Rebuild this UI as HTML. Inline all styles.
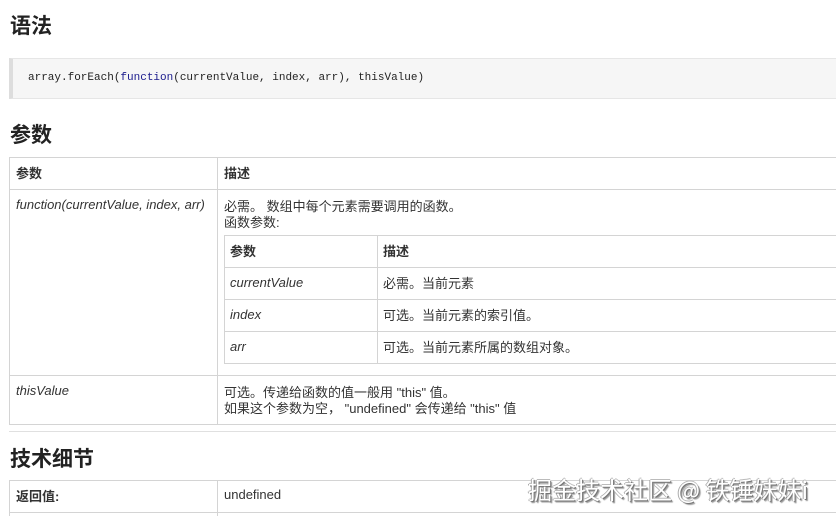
<!DOCTYPE html>
<html><head><meta charset="utf-8"><style>
body{margin:0;width:836px;height:516px;overflow:hidden;background:#fff;font-family:"Liberation Sans","Noto Sans CJK SC",sans-serif;font-size:13px;color:#333;position:relative}
.a{position:absolute}
h2{position:absolute;margin:0;font-size:21px;font-weight:bold;color:#222;left:10px}
.code{left:9px;top:58px;width:827px;height:41px;background:#f6f6f6;border-left:4px solid #ddd;border-top:1px solid #e6e6e6;border-bottom:1px solid #e6e6e6;box-sizing:border-box;font-family:"Liberation Mono",monospace;font-size:11px;line-height:39px;padding-left:15px;color:#222}
.code .k{color:#1a1a8c}
.line{position:absolute;background:#d4d4d4}
.t{position:absolute;font-size:13px;line-height:16px}
i{font-style:italic}
b{font-weight:bold}
.wm{position:absolute;left:528px;top:471px;font-size:24px;color:#fff;text-shadow:1px 1px 0 #777,-1px 0 0 #aaa,0 -1px 0 #bbb,2px 2px 1px #999;font-family:"Noto Sans CJK SC",sans-serif}
</style></head><body>
<h2 style="top:10px">语法</h2>
<div class="a code">array.forEach(<span class="k">function</span>(currentValue, index, arr), thisValue)</div>
<h2 style="top:119px">参数</h2>
<div class="line" style="left:9px;top:157px;width:827px;height:1px"></div>
<div class="line" style="left:9px;top:189px;width:827px;height:1px"></div>
<div class="line" style="left:9px;top:375px;width:827px;height:1px"></div>
<div class="line" style="left:9px;top:424px;width:827px;height:1px"></div>
<div class="line" style="left:9px;top:157px;width:1px;height:268px"></div>
<div class="line" style="left:217px;top:157px;width:1px;height:268px"></div>
<div class="t" style="left:16px;top:166px"><b>参数</b></div>
<div class="t" style="left:224px;top:166px"><b>描述</b></div>
<div class="t" style="left:16px;top:197px"><i>function(currentValue, index, arr)</i></div>
<div class="t" style="left:224px;top:199px">必需。 数组中每个元素需要调用的函数。<br>函数参数:</div>
<div class="line" style="left:224px;top:235px;width:612px;height:1px"></div>
<div class="line" style="left:224px;top:267px;width:612px;height:1px"></div>
<div class="line" style="left:224px;top:299px;width:612px;height:1px"></div>
<div class="line" style="left:224px;top:331px;width:612px;height:1px"></div>
<div class="line" style="left:224px;top:363px;width:612px;height:1px"></div>
<div class="line" style="left:224px;top:235px;width:1px;height:129px"></div>
<div class="line" style="left:377px;top:235px;width:1px;height:129px"></div>
<div class="t" style="left:230px;top:244px"><b>参数</b></div>
<div class="t" style="left:383px;top:244px"><b>描述</b></div>
<div class="t" style="left:230px;top:275px"><i>currentValue</i></div>
<div class="t" style="left:383px;top:276px">必需。当前元素</div>
<div class="t" style="left:230px;top:307px"><i>index</i></div>
<div class="t" style="left:383px;top:308px">可选。当前元素的索引值。</div>
<div class="t" style="left:230px;top:339px"><i>arr</i></div>
<div class="t" style="left:383px;top:340px">可选。当前元素所属的数组对象。</div>
<div class="t" style="left:16px;top:383px"><i>thisValue</i></div>
<div class="t" style="left:224px;top:385px">可选。传递给函数的值一般用 "this" 值。<br>如果这个参数为空， "undefined" 会传递给 "this" 值</div>
<div class="line" style="left:9px;top:431px;width:827px;height:1px;background:#e0e0e0"></div>
<h2 style="top:443px">技术细节</h2>
<div class="line" style="left:9px;top:480px;width:827px;height:1px"></div>
<div class="line" style="left:9px;top:512px;width:827px;height:1px"></div>
<div class="line" style="left:9px;top:480px;width:1px;height:36px"></div>
<div class="line" style="left:217px;top:480px;width:1px;height:36px"></div>
<div class="t" style="left:16px;top:489px"><b>返回值:</b></div>
<div class="t" style="left:224px;top:487px">undefined</div>
<div class="wm">掘金技术社区 @ 铁锤妹妹i</div>
</body></html>
